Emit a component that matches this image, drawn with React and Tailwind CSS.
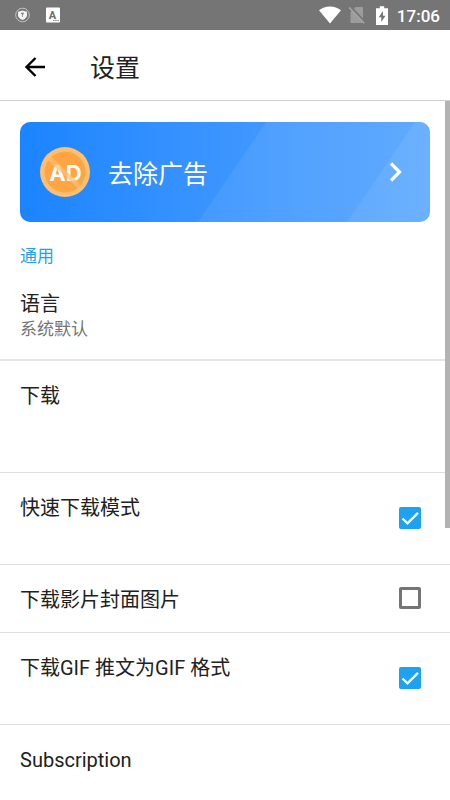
import React, { useState } from 'react';

const StatusBar = () => (
  <div className="flex h-[30px] shrink-0 items-center justify-between bg-[#757575] pl-[15px] pr-[10px] text-white">
    <div className="flex items-center gap-[15px]">
      <svg className="h-4 w-4" viewBox="0 0 16 16" fill="none">
        <circle cx="7.5" cy="8" r="6.8" stroke="#c4c4c4" strokeWidth="1" />
        <path d="M7.5 3.5 12 4.8v3.5c0 2.200-2 3.800-4.500 4.700C5 12.100 3 10.500 3 8.300V4.800z" fill="#f2f2f2" />
        <path d="M7.5 10V7.5M6.3 6h2.4L7.5 8z" stroke="#8a8a8a" strokeWidth="0.8" fill="#8a8a8a" />
      </svg>
      <svg className="h-4 w-4" viewBox="0 0 16 16">
        <rect x="0" y="0.5" width="14" height="15" rx="1" fill="#fff" />
        <text x="6.5" y="11.5" textAnchor="middle" fontSize="11" fontWeight="700" fontFamily="Roboto, sans-serif" fill="#6b6b6b">A</text>
        <path d="M7 13.5h6" stroke="#8a8a8a" strokeWidth="1" strokeDasharray="1.5 0.7" />
      </svg>
    </div>
    <div className="flex items-center">
      <svg className="h-[18px] w-[22px]" viewBox="0 0 22 18">
        <path d="M11 17.5 0 4.3C3 1.8 6.8.4 11 .4s8 1.400 11 3.900z" fill="#fff" />
      </svg>
      <svg className="ml-2 h-[18px] w-4" viewBox="0 0 16 18" fill="none">
        <path d="M3.5 4.5 6.5 1H14v16H1.5V6z" fill="#9c9c9c" />
        <path d="M1.2.3 16 16" stroke="#757575" strokeWidth="2" />
        <path d="M0 1.3 15.2 17.3" stroke="#a4a4a4" strokeWidth="1.5" />
      </svg>
      <svg className="ml-[11px] h-[19px] w-3" viewBox="0 0 12 19">
        <path d="M3.8.3h4.4v2H12V19H0V2.300h3.800z" fill="#fff" />
        <path d="M7 5 2.7 11.2h2.600V16L9.500 9.700H7z" fill="#757575" />
      </svg>
      <span className="ml-[9px] pt-0.5 text-[17px] leading-6 font-medium">17:06</span>
    </div>
  </div>
);

const AdBadge = () => (
  <svg className="h-[50px] w-[50px] shrink-0" viewBox="0 0 50 50">
    <circle cx="25" cy="25" r="25" fill="#fdbf70" />
    <circle cx="25" cy="25" r="20.5" fill="#ffa544" />
    <text x="25.5" y="34" textAnchor="middle" fontSize="22" fontWeight="700" fontFamily="Inter, sans-serif" fill="#fff">AD</text>
    <path d="M9 11 40 40" stroke="#fdbf70" strokeOpacity="0.75" strokeWidth="4.5" />
  </svg>
);

const RemoveAdsBanner = () => (
  <button
    type="button"
    className="relative mx-5 mt-[21px] flex h-[100px] shrink-0 items-center overflow-hidden rounded-[10px] bg-gradient-to-r from-[#1a84ff] to-[#55a5ff] px-5 text-white"
  >
    <svg className="absolute inset-0 h-full w-full" viewBox="0 0 410 100" preserveAspectRatio="none">
      <path d="M246 0H410V100H178z" fill="#fff" fillOpacity="0.07" />
      <path d="M395 0H410V100H327z" fill="#fff" fillOpacity="0.07" />
    </svg>
    <span className="relative flex w-full items-center">
      <AdBadge />
      <span className="ml-[18px] flex-1 pt-1.5 text-left text-[25px] leading-8">去除广告</span>
      <svg className="mr-2 h-5 w-3" viewBox="0 0 12 20" fill="none">
        <path d="M1 1.5 9.5 10 1 18.5" stroke="#fff" strokeWidth="3.2" />
      </svg>
    </span>
  </button>
);

const CheckRow = ({ id, title, checked, onChange, className }) => (
  <div className={`flex shrink-0 justify-between border-b border-[#dedede] pl-5 pr-[29px] ${className}`}>
    <label htmlFor={id} className="pt-[21px] text-[20px] leading-7">{title}</label>
    <span className="relative flex items-center pb-0.5">
      <input
        id={id}
        type="checkbox"
        checked={checked}
        onChange={onChange}
        className="peer h-[22px] w-[22px] appearance-none rounded-[2px] border-[3px] border-[#757575] checked:border-[#1da1f2] checked:bg-[#1da1f2]"
      />
      <svg className="pointer-events-none absolute left-0 hidden h-[22px] w-[22px] peer-checked:block" viewBox="0 0 22 22" fill="none">
        <path d="M3.5 11.5 8.5 16.3 19 5.8" stroke="#fff" strokeWidth="2.4" />
      </svg>
    </span>
  </div>
);

const App = () => {
  const [settings, setSettings] = useState({
    fastMode: true,
    coverImage: false,
    gifFormat: true
  });

  const toggle = (e) => {
    const { id, checked } = e.target;
    setSettings(prev => ({ ...prev, [id]: checked }));
  };

  return (
    <div className="flex h-screen flex-col overflow-hidden bg-white font-[Roboto,'Noto_Sans_CJK_SC',sans-serif] text-[#212121]">
      <StatusBar />

      <header className="flex h-[71px] shrink-0 items-center border-b border-[#d0d0d0] bg-white px-[25px] pt-1">
        <button type="button" aria-label="返回">
          <svg className="h-5 w-5" viewBox="0 0 20 20" fill="none" stroke="#000" strokeWidth="2.4">
            <path d="M20 10H2M10.5 1 1.5 10l9 9" />
          </svg>
        </button>
        <h1 className="ml-[45px] pt-1 text-[25px] leading-8">设置</h1>
      </header>

      <main className="relative flex flex-1 flex-col overflow-hidden">
        <RemoveAdsBanner />

        <h2 className="mx-5 mt-[22px] shrink-0 text-[17px] leading-6 text-[#1da1f2]">通用</h2>

        <div className="mt-[23px] shrink-0 border-b-2 border-[#e4e4e4] px-5 pb-[18px]">
          <p className="text-[20px] leading-[26px]">语言</p>
          <p className="text-[17px] leading-6 text-[#757575]">系统默认</p>
        </div>

        <div className="h-28 shrink-0 border-b border-[#dedede] px-5 pt-[21px] text-[20px] leading-7">下载</div>

        <CheckRow id="fastMode" title="快速下载模式" checked={settings.fastMode} onChange={toggle} className="h-[92px]" />
        <CheckRow id="coverImage" title="下载影片封面图片" checked={settings.coverImage} onChange={toggle} className="h-[68px]" />
        <CheckRow id="gifFormat" title="下载GIF 推文为GIF 格式" checked={settings.gifFormat} onChange={toggle} className="h-[92px]" />

        <div className="shrink-0 px-5 pt-[21px] text-[20px] leading-7">Subscription</div>

        {/* scroll thumb */}
        <div className="absolute top-0 right-0 h-[427px] w-[5px] bg-[#b3b3b3]" />
      </main>
    </div>
  );
};

export default App;
